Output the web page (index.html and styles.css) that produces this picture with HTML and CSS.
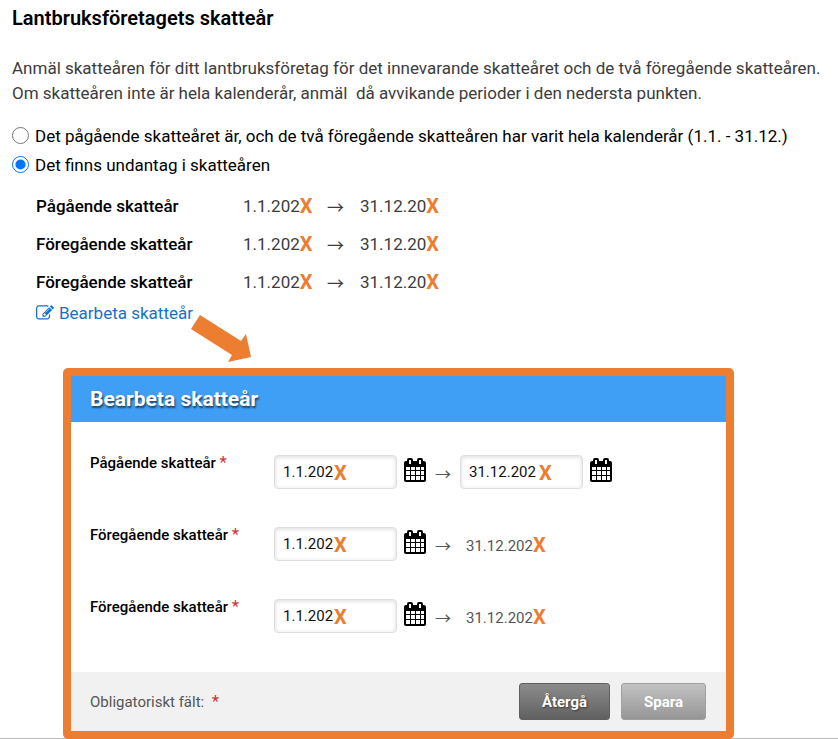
FILE: index.html
```html
<!DOCTYPE html>
<html lang="sv">
<head>
    <meta charset="UTF-8">
    <meta name="viewport" content="width=device-width, initial-scale=1.0">
    <title>Lantbruksföretagets skatteår</title>
    <link rel="stylesheet" href="styles.css">
</head>
<body>
    <!-- Shared icons -->
    <svg class="sprite" width="0" height="0" aria-hidden="true">
        <symbol id="icon-calendar" viewBox="0 0 22 24">
            <path fill="#000" d="M2 3h18a2 2 0 0 1 2 2v17a2 2 0 0 1-2 2H2a2 2 0 0 1-2-2V5a2 2 0 0 1 2-2z"/>
            <path fill="#000" d="M3 2a2 2 0 0 1 2-2h2a2 2 0 0 1 2 2v5H3zM13 2a2 2 0 0 1 2-2h2a2 2 0 0 1 2 2v5h-6z"/>
            <path fill="#fff" d="M5 2h2v4H5zM15 2h2v4h-2z"/>
            <path fill="#fff" d="M2 9h4v3H2zM7 9h4v3H7zM12 9h4v3h-4zM17 9h3v3h-3zM2 13h4v4H2zM7 13h4v4H7zM12 13h4v4h-4zM17 13h3v4h-3zM2 18h4v4H2zM7 18h4v4H7zM12 18h4v4h-4zM17 18h3v4h-3z"/>
        </symbol>
    </svg>

    <main class="page">
        <h1>Lantbruksföretagets skatteår</h1>
        <p class="intro">Anmäl skatteåren för ditt lantbruksföretag för det innevarande skatteåret och de två föregående skatteåren.<br>Om skatteåren inte är hela kalenderår, anmäl &nbsp;då avvikande perioder i den nedersta punkten.</p>

        <div class="choice">
            <input type="radio" name="taxyear" id="year-full">
            <label for="year-full">Det pågående skatteåret är, och de två föregående skatteåren har varit hela kalenderår (1.1. - 31.12.)</label>
        </div>
        <div class="choice">
            <input type="radio" name="taxyear" id="year-exception" checked>
            <label for="year-exception">Det finns undantag i skatteåren</label>
        </div>

        <table class="years">
            <tr>
                <th scope="row">Pågående skatteår</th>
                <td class="from">1.1.202<b class="x">X</b></td>
                <td class="arrow">→</td>
                <td>31.12.20<b class="x">X</b></td>
            </tr>
            <tr>
                <th scope="row">Föregående skatteår</th>
                <td class="from">1.1.202<b class="x">X</b></td>
                <td class="arrow">→</td>
                <td>31.12.20<b class="x">X</b></td>
            </tr>
            <tr>
                <th scope="row">Föregående skatteår</th>
                <td class="from">1.1.202<b class="x">X</b></td>
                <td class="arrow">→</td>
                <td>31.12.20<b class="x">X</b></td>
            </tr>
        </table>

        <div class="edit-row">
            <a class="edit" href="#edit">
                <svg width="18" height="16" viewBox="0 0 1792 1536" aria-hidden="true">
                    <path fill="currentColor" d="M888 1056l116-116-152-152-116 116v56h96v96h56zm440-720q-16-16-33 1L945 687q-17 17-1 33t33-1l350-350q17-17 1-33zm80 594v190q0 119-84.500 203.500T1120 1408H288q-119 0-203.500-84.500T0 1120V288Q0 169 84.500 84.500T288 0h832q63 0 117 25 15 7 18 23 3 17-9 29l-49 49q-14 14-32 8-23-6-45-6H288q-66 0-113 47t-47 113v832q0 66 47 113t113 47h832q66 0 113-47t47-113V994q0-13 9-22l64-64q15-15 35-7t20 29zm-96-738l288 288-672 672H640V864zm444 132l-92 92-288-288 92-92q28-28 68-28t68 28l152 152q28 28 28 68t-28 68z"/>
                </svg>
                Bearbeta skatteår
            </a>
            <svg class="pointer" width="62" height="50" viewBox="0 0 62 50" aria-hidden="true">
                <path fill="#ed7d31" d="M9 0L50 26 55 19 60 42 37 47 41 40 0 14z"/>
            </svg>
        </div>

        <form class="dialog" id="edit">
            <h2>Bearbeta skatteår</h2>
            <div class="fields">
                <div class="field">
                    <label for="start-1">Pågående skatteår <span class="req">*</span></label>
                    <div class="date">
                        <input type="text" id="start-1" value="1.1.202">
                        <b class="x over-start">X</b>
                    </div>
                    <button type="button" class="cal" aria-label="Kalender"><svg width="22" height="24"><use href="#icon-calendar"/></svg></button>
                    <span class="arrow">→</span>
                    <div class="date">
                        <input type="text" id="end-1" value="31.12.202" aria-label="Pågående skatteår, slut">
                        <b class="x over-end">X</b>
                    </div>
                    <button type="button" class="cal" aria-label="Kalender"><svg width="22" height="24"><use href="#icon-calendar"/></svg></button>
                </div>
                <div class="field">
                    <label for="start-2">Föregående skatteår <span class="req">*</span></label>
                    <div class="date">
                        <input type="text" id="start-2" value="1.1.202">
                        <b class="x over-start">X</b>
                    </div>
                    <button type="button" class="cal" aria-label="Kalender"><svg width="22" height="24"><use href="#icon-calendar"/></svg></button>
                    <span class="arrow">→</span>
                    <span class="fixed">31.12.202<b class="x">X</b></span>
                </div>
                <div class="field">
                    <label for="start-3">Föregående skatteår <span class="req">*</span></label>
                    <div class="date">
                        <input type="text" id="start-3" value="1.1.202">
                        <b class="x over-start">X</b>
                    </div>
                    <button type="button" class="cal" aria-label="Kalender"><svg width="22" height="24"><use href="#icon-calendar"/></svg></button>
                    <span class="arrow">→</span>
                    <span class="fixed">31.12.202<b class="x">X</b></span>
                </div>
            </div>
            <footer>
                <span>Obligatoriskt fält: &nbsp;<span class="req">*</span></span>
                <div class="buttons">
                    <button type="button" class="btn">Återgå</button>
                    <button type="submit" class="btn light">Spara</button>
                </div>
            </footer>
        </form>
    </main>
</body>
</html>
```

FILE: styles.css
```css
* {
    box-sizing: border-box;
}
body {
    margin: 0;
    font-family: Roboto, "Noto Sans CJK JP", sans-serif;
    font-size: 17px;
    color: #3c3c3c;
    background: #fff;
}
.sprite {
    position: absolute;
}
.page {
    padding: 6px 0 0 12px;
    border-bottom: 1px solid #bbb;
}
h1 {
    margin: 0;
    font-size: 20px;
    line-height: 24px;
    font-weight: 600;
    color: #000;
}
.intro {
    margin: 26px 0 15px;
    line-height: 25px;
}
.choice {
    display: flex;
    align-items: center;
    gap: 6px;
    height: 29px;
    color: #000;
}
.choice input {
    width: 17px;
    height: 17px;
    margin: 0;
    accent-color: #0075ff;
}
.x {
    font-size: 20px;
    line-height: 0;
    font-weight: 700;
    vertical-align: -1px;
    color: #ed7d31;
}

/* summary of the years */
.years {
    margin: 8px 0 0 24px;
    border-collapse: collapse;
}
.years th,
.years td {
    height: 38px;
    padding: 0;
    text-align: left;
    line-height: 20px;
}
.years th {
    width: 207px;
    font-weight: 500;
    color: #000;
}
.years .from {
    width: 84px;
}
.years .arrow {
    width: 33px;
    padding-top: 4px;
}
.edit-row {
    display: flex;
    align-items: flex-start;
    margin-left: 24px;
    height: 67px;
}
.edit {
    display: flex;
    align-items: center;
    gap: 5px;
    line-height: 24px;
    color: #1572c8;
    text-decoration: none;
}
.pointer {
    margin: 14px 0 0 -2px;
}

/* edit dialog */
.dialog {
    position: relative;
    margin: 0 104px -1px 51px;
    border: 8px solid #ed7d31;
    border-radius: 5px;
    font-size: 15px;
}
.dialog h2 {
    margin: 0;
    padding: 0 19px;
    font-size: 21px;
    line-height: 46px;
    color: #fff;
    background: #3f9ff5;
    text-shadow: 1px 2px 2px rgba(0, 0, 0, 0.6);
}
.fields {
    padding: 33px 19px 39px;
    display: flex;
    flex-direction: column;
    gap: 38px;
}
.field {
    display: flex;
    align-items: center;
    height: 34px;
}
.field label {
    align-self: flex-start;
    width: 184px;
    line-height: 16px;
    font-weight: 500;
    color: #000;
}
.req {
    font-size: 17px;
    line-height: 0;
    color: #c33;
    font-weight: 400;
}
.date {
    position: relative;
}
.date input {
    display: block;
    width: 123px;
    height: 34px;
    padding: 0 8px;
    font: inherit;
    color: #111;
    border: 1px solid #ddd;
    border-radius: 4px;
    box-shadow: inset 0 1px 4px rgba(0, 0, 0, 0.15);
}
.date .x {
    position: absolute;
    top: 18px;
}
.over-start {
    left: 60px;
}
.over-end {
    left: 79px;
}
.cal {
    align-self: flex-start;
    margin: 3px 8px 0 7px;
    padding: 0;
    border: 0;
    background: none;
}
.cal svg {
    display: block;
}
.field .arrow {
    width: 26px;
    padding: 1px 0 0 1px;
    font-size: 16px;
    color: #555;
}
.fixed {
    padding: 3px 0 0 6px;
    color: #555;
}
footer {
    display: flex;
    align-items: center;
    justify-content: space-between;
    height: 59px;
    padding: 0 20px 0 19px;
    color: #555;
    background: #f1f1f1;
}
.buttons {
    display: flex;
    gap: 11px;
}
.btn {
    height: 37px;
    padding: 0 22px;
    font: 700 15px Roboto, sans-serif;
    color: #fff;
    border: 1px solid #606060;
    border-radius: 3px;
    background: linear-gradient(#8c8c8c, #606060);
    text-shadow: 1px 1px 2px rgba(0, 0, 0, 0.5);
}
.btn.light {
    border-color: #a0a0a0;
    background: linear-gradient(#c2c2c2, #969696);
    text-shadow: none;
}
```
